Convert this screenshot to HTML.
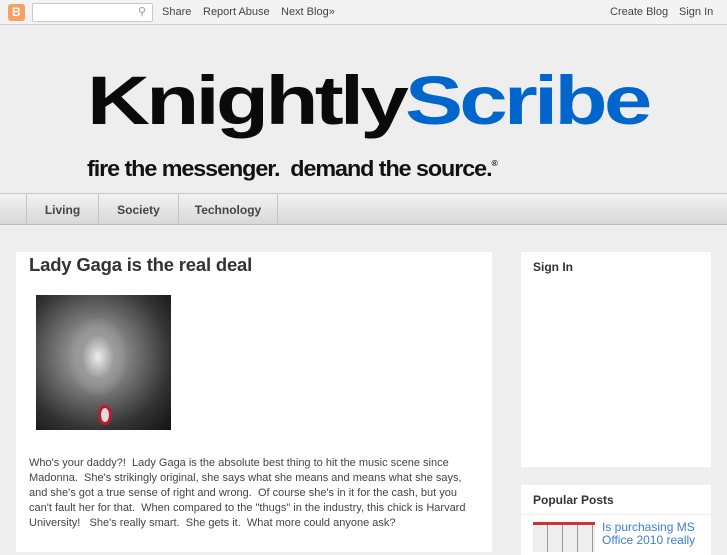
<!DOCTYPE html>
<html><head><style>
*{margin:0;padding:0;box-sizing:border-box}
body{width:727px;height:545px;overflow:hidden;background:#eeeeee;font-family:"Liberation Sans",Arial,sans-serif;position:relative}
.nb{position:absolute;left:0;top:0;width:727px;height:25px;background:#f3f3f3;border-bottom:1px solid #cfcfcf;font-size:11px;color:#444}
.nb span{position:absolute;top:6px}
.logo{position:absolute;left:8px;top:4px;width:17px;height:17px;background:#f8a060;border-radius:3px}
.logo:after{content:"B";position:absolute;left:4px;top:1px;color:#fff;font-weight:bold;font-size:12px}
.search{position:absolute;left:32px;top:3px;width:121px;height:19px;background:#fff;border:1px solid #c8c8c8;border-radius:2px}
.kt{position:absolute;left:87px;top:66px;font-size:69px;line-height:69px;font-weight:bold;letter-spacing:-3px;color:#0a0a0a;white-space:nowrap;transform:scaleX(1.262);transform-origin:left}
.kt b{color:#0066cc}
.tag{position:absolute;left:87px;top:156px;font-size:22px;font-weight:bold;letter-spacing:-1px;color:#111;white-space:nowrap;transform:scaleX(1.06);transform-origin:left}
.tag sup{font-size:8px;vertical-align:10px}
.tabs{position:absolute;left:0;top:193px;width:727px;height:32px;background:linear-gradient(#f2f2f2,#d8d8d8);border-top:1px solid #c8c8c8;border-bottom:1px solid #bbb}
.tabs div{position:absolute;top:0;height:31px;border-left:1px solid #c4c4c4;font-size:12px;font-weight:bold;color:#444;padding-top:9px;text-align:center}
.post{position:absolute;left:16px;top:252px;width:476px;height:300px;background:#fff}
.post h1{position:absolute;left:13px;top:2px;font-size:18.5px;color:#333;letter-spacing:-0.2px}
.img{position:absolute;left:20px;top:43px;width:135px;height:135px;background:radial-gradient(ellipse 30px 40px at 62px 62px,#eee,#999 55%,transparent 100%),radial-gradient(circle at 60px 60px,#bbb,#333 70%,#111);}
.lip{position:absolute;left:62px;top:110px;width:14px;height:20px;border-radius:50%;background:#ddd;border:3px solid #c01828}
.txt{position:absolute;left:13px;top:204px;width:452px;font-size:11px;line-height:15px;color:#444}
.sb{position:absolute;left:521px;top:252px;width:190px;background:#fff}
.sb h2{font-size:12px;color:#333;padding:8px 12px}
.pimg{position:absolute;left:12px;top:37px;width:62px;height:30px;background:repeating-linear-gradient(90deg,#eee 0 14px,#999 14px 15px),#ccc;border-top:3px solid #c33}
</style></head><body>
<div class="nb"><div class="logo"></div><div class="search"><span style="left:105px;top:1px;color:#999">&#9906;</span></div>
<span style="left:162px">Share</span><span style="left:203px">Report Abuse</span><span style="left:281px">Next Blog»</span>
<span style="left:610px">Create Blog</span><span style="left:679px">Sign In</span></div>
<div class="kt">Knightly<b>Scribe</b></div>
<div class="tag">fire the messenger.&nbsp; demand the source.<sup>®</sup></div>
<div class="tabs"><div style="left:26px;width:72px">Living</div><div style="left:98px;width:80px">Society</div><div style="left:178px;width:100px;border-right:1px solid #c4c4c4">Technology</div></div>
<div class="post"><h1>Lady Gaga is the real deal</h1><div class="img"><div class="lip"></div></div>
<div class="txt">Who's your daddy?!&nbsp; Lady Gaga is the absolute best thing to hit the music scene since Madonna.&nbsp; She's strikingly original, she says what she means and means what she says, and she's got a true sense of right and wrong.&nbsp; Of course she's in it for the cash, but you can't fault her for that.&nbsp; When compared to the "thugs" in the industry, this chick is Harvard University!&nbsp;&nbsp; She's really smart.&nbsp; She gets it.&nbsp; What more could anyone ask?</div></div>
<div class="sb" style="height:215px"><h2 style="padding-top:8px">Sign In</h2></div>
<div class="sb" style="top:485px;height:70px"><h2 style="padding-top:8px;border-bottom:1px solid #eee;height:30px">Popular Posts</h2><div class="pimg"></div>
<div style="position:absolute;left:81px;top:36px;font-size:12px;line-height:13px;color:#3b7dd8">Is purchasing MS<br>Office 2010 really</div></div>
</body></html>
